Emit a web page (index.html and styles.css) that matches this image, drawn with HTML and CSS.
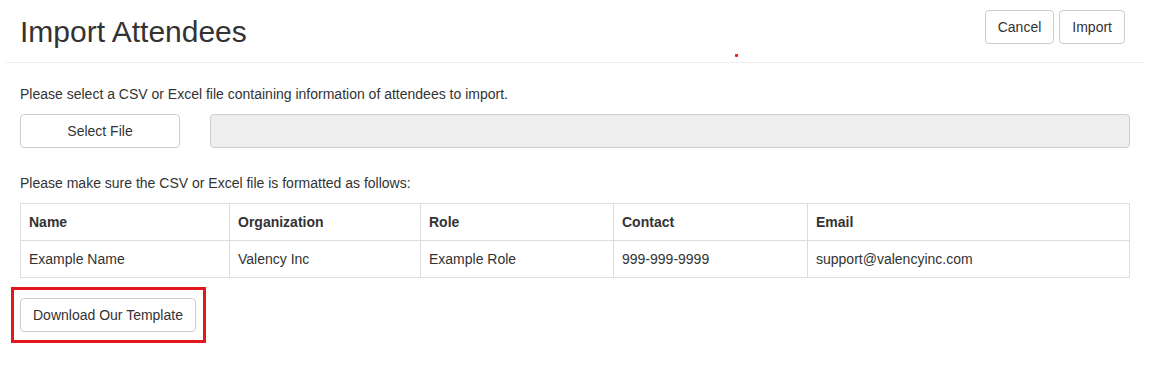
FILE: index.html
```html
<!doctype html>
<html lang="en">
  <head>
    <meta charset="UTF-8" />
    <meta
      name="viewport"
      content="width=device-width, initial-scale=1.0"
    />
    <title>Import Attendees</title>
    <link rel="stylesheet" href="styles.css">
  </head>
  <body>
    <div class="page">
      <div class="header">
        <h1 class="title">Import Attendees</h1>
        <div class="actions">
          <button class="btn">Cancel</button>
          <button class="btn">Import</button>
        </div>
      </div>

      <div class="content">
        <p class="note">Please select a CSV or Excel file containing information of attendees to import.</p>

        <div class="file-row">
          <button class="btn btn-block">Select File</button>
          <div class="file-name"></div>
        </div>

        <p class="note note-format">Please make sure the CSV or Excel file is formatted as follows:</p>

        <table class="format-table">
          <colgroup>
            <col style="width: 209px" />
            <col style="width: 191px" />
            <col style="width: 193px" />
            <col style="width: 194px" />
            <col />
          </colgroup>
          <thead>
            <tr>
              <th>Name</th>
              <th>Organization</th>
              <th>Role</th>
              <th>Contact</th>
              <th>Email</th>
            </tr>
          </thead>
          <tbody>
            <tr>
              <td>Example Name</td>
              <td>Valency Inc</td>
              <td>Example Role</td>
              <td>999-999-9999</td>
              <td>support@valencyinc.com</td>
            </tr>
          </tbody>
        </table>

        <div class="highlight">
          <button class="btn">Download Our Template</button>
        </div>
      </div>

      <span class="dot"></span>
    </div>
  </body>
</html>
```

FILE: styles.css
```css
body {
  margin: 0;
  font-family: "Liberation Sans", Arial, sans-serif;
  font-size: 14px;
  line-height: 20px;
  color: #333;
  background: #fff;
}

.page {
  position: relative;
  margin: 0 14px 0 5px;
}

.header {
  display: flex;
  justify-content: space-between;
  align-items: flex-start;
  height: 62px;
  padding: 0 20px 0 15px;
  border-bottom: 1px solid #eee;
}

.title {
  margin: 15px 0 0;
  font-size: 30px;
  font-weight: normal;
  line-height: 33px;
}

.actions {
  display: flex;
  gap: 5px;
  margin-top: 10px;
}

.btn {
  height: 34px;
  padding: 6px 12px;
  font-family: inherit;
  font-size: 14px;
  line-height: 20px;
  color: #333;
  background: #fff;
  border: 1px solid #ccc;
  border-radius: 4px;
  cursor: pointer;
}

.content {
  padding: 21px 15px 0;
}

.note {
  margin: 0 0 10px;
}

.note-format {
  margin-top: 25px;
}

.file-row {
  display: grid;
  grid-template-columns: 160px 1fr;
  gap: 30px;
}

.btn-block {
  width: 100%;
}

.file-name {
  height: 34px;
  box-sizing: border-box;
  background: #eee;
  border: 1px solid #ccc;
  border-radius: 4px;
}

.format-table {
  width: 100%;
  table-layout: fixed;
  border-collapse: collapse;
}

.format-table th,
.format-table td {
  padding: 8px;
  text-align: left;
  border: 1px solid #ddd;
}

.format-table th {
  font-weight: bold;
}

/* annotation box drawn around the template button */
.highlight {
  display: inline-block;
  margin: 9px 0 0 -9px;
  padding: 8px 7px 8px 6px;
  border: 3px solid #e3181f;
}

.highlight .btn {
  display: block;
}

.dot {
  position: absolute;
  top: 54px;
  left: 730px;
  width: 3px;
  height: 3px;
  background: #f01818;
  border-radius: 1px;
}
```
